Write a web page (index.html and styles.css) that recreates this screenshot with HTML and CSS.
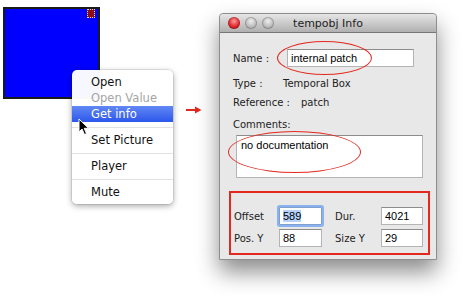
FILE: index.html
```html
<!DOCTYPE html>
<html lang="en">
<head>
    <meta charset="UTF-8">
    <title>tempobj Info</title>
    <link rel="stylesheet" href="styles.css">
</head>
<body>
    <div class="stage">
        <div class="boite">
            <span class="poignee"></span>
        </div>

        <ul class="menu">
            <li>Open</li>
            <li class="desactive">Open Value</li>
            <li class="actif">Get info</li>
            <li class="separateur"></li>
            <li>Set Picture</li>
            <li class="separateur"></li>
            <li>Player</li>
            <li class="separateur"></li>
            <li>Mute</li>
        </ul>

        <svg class="curseur" width="12" height="18" viewBox="0 0 12 18">
            <path d="M1 1 L1 14 L4 11 L6.5 16.5 L8.5 15.6 L6.2 10.3 L10.5 10.3 Z" fill="#000" stroke="#fff" stroke-width="1"/>
        </svg>

        <svg class="fleche" width="16" height="8" viewBox="0 0 16 8">
            <path d="M0 4 H10" stroke="#e3281e" stroke-width="2"/>
            <path d="M9 0.5 L15.5 4 L9 7.5 Z" fill="#e3281e"/>
        </svg>

        <div class="fenetre">
            <div class="barre-titre">
                <div class="boutons">
                    <span class="bouton rouge"></span>
                    <span class="bouton"></span>
                    <span class="bouton"></span>
                </div>
                <span class="titre">tempobj Info</span>
            </div>

            <div class="contenu">
                <div class="ligne ligne-nom">
                    <span class="etiquette">Name :</span>
                    <span class="champ champ-nom">internal patch</span>
                </div>
                <div class="ligne ligne-type">
                    <span class="etiquette etiquette-type">Type :</span>
                    <span class="valeur">Temporal Box</span>
                </div>
                <div class="ligne ligne-ref">
                    <span class="etiquette">Reference :</span>
                    <span class="valeur">patch</span>
                </div>
                <div class="ligne ligne-comm">
                    <span class="etiquette">Comments:</span>
                </div>
                <div class="commentaires">no documentation</div>

                <div class="cadre">
                    <span class="etiquette">Offset</span>
                    <span class="champ champ-focus"><span class="selection">589</span></span>
                    <span class="etiquette">Dur.</span>
                    <span class="champ">4021</span>
                    <span class="etiquette">Pos. Y</span>
                    <span class="champ">88</span>
                    <span class="etiquette">Size Y</span>
                    <span class="champ">29</span>
                </div>
            </div>

            <span class="ellipse ellipse-nom"></span>
            <span class="ellipse ellipse-comm"></span>
        </div>
    </div>
</body>
</html>
```

FILE: styles.css
```css
body {
    margin: 0;
    background-color: #fff;
    font-family: 'DejaVu Sans', sans-serif;
    color: #111;
}

.stage {
    position: relative;
    width: 463px;
    height: 296px;
    overflow: hidden;
}

/* boite bleue */
.boite {
    position: absolute;
    left: 3px;
    top: 7px;
    width: 93px;
    height: 88px;
    background-color: #0000ff;
    border: 2px solid #1a1a1a;
}

.poignee {
    position: absolute;
    right: 3px;
    top: 0;
    width: 6px;
    height: 7px;
    background-color: #8a0d12;
    border: 1px dotted #ddd;
}

/* menu contextuel */
.menu {
    position: absolute;
    left: 72px;
    top: 70px;
    width: 101px;
    margin: 0;
    padding: 4px 0;
    list-style: none;
    background-color: rgba(255, 255, 255, 0.97);
    border-radius: 5px;
    box-shadow: 0 2px 6px rgba(0, 0, 0, 0.35), 0 0 0 1px rgba(0, 0, 0, 0.08);
    font-size: 11.5px;
}

.menu li {
    height: 16px;
    line-height: 16px;
    padding-left: 19px;
}

.menu .desactive {
    color: #a5a5a5;
}

.menu .actif {
    color: #fff;
    background: linear-gradient(#6288f4, #2c57ec);
}

.menu .separateur {
    height: 10px;
    padding: 0;
    background: linear-gradient(transparent 5px, #e2e2e2 5px, #e2e2e2 6px, transparent 6px);
}

.curseur {
    position: absolute;
    left: 78px;
    top: 118px;
}

.fleche {
    position: absolute;
    left: 186px;
    top: 106px;
}

/* fenetre info */
.fenetre {
    position: absolute;
    left: 219px;
    top: 13px;
    width: 216px;
    height: 245px;
    background-color: #e8e8e8;
    border: 1px solid #8e8e8e;
    border-radius: 4px 4px 0 0;
    box-shadow: 0 12px 22px rgba(0, 0, 0, 0.45);
}

.barre-titre {
    position: relative;
    height: 18px;
    display: flex;
    align-items: center;
    justify-content: center;
    background: linear-gradient(#e6e6e6, #b0b0b0);
    border-bottom: 1px solid #777;
    border-radius: 4px 4px 0 0;
}

.boutons {
    position: absolute;
    left: 8px;
    top: 3px;
    display: flex;
    gap: 5px;
}

.bouton {
    width: 12px;
    height: 12px;
    border-radius: 50%;
    background: radial-gradient(circle at 50% 35%, #eee, #b8b8b8 60%, #9a9a9a);
    box-shadow: inset 0 0 0 1px rgba(0, 0, 0, 0.2);
}

.bouton.rouge {
    background: radial-gradient(circle at 50% 35%, #ff9a9a, #e0262a 55%, #9c1014);
}

.titre {
    font-size: 11px;
    color: #222;
}

.contenu {
    display: flex;
    flex-direction: column;
    padding: 16px 0 0 13px;
}

.ligne {
    display: flex;
    align-items: center;
    height: 16px;
}

.etiquette {
    font-size: 10px;
    color: #222;
}

.valeur {
    font-size: 10px;
    color: #222;
}

.ligne-nom {
    height: 18px;
}

.ligne-nom .etiquette {
    width: 54px;
}

.ligne-type {
    margin-top: 8px;
}

.etiquette-type {
    width: 50px;
}

.ligne-ref {
    margin-top: 3px;
}

.ligne-ref .etiquette {
    width: 68px;
}

.ligne-comm {
    margin-top: 6px;
}

.champ {
    box-sizing: border-box;
    height: 18px;
    padding: 0 3px;
    background-color: #fff;
    border: 1px solid #b4b4b4;
    border-top-color: #8c8c8c;
    font-family: 'Liberation Sans', sans-serif;
    font-size: 11px;
    line-height: 16px;
    color: #000;
}

.champ-nom {
    width: 127px;
}

.commentaires {
    box-sizing: border-box;
    width: 187px;
    height: 43px;
    margin: 3px 0 0 3px;
    padding: 3px 4px;
    background-color: #fff;
    border: 1px solid #b4b4b4;
    border-top-color: #8c8c8c;
    font-family: 'Liberation Sans', sans-serif;
    font-size: 11px;
    color: #000;
}

.cadre {
    box-sizing: border-box;
    width: 201px;
    height: 64px;
    margin: 13px 0 0 -4px;
    padding: 14px 0 0 3px;
    border: 2px solid #e3281e;
    display: grid;
    grid-template-columns: 45px 43px 13px 46px 42px;
    grid-template-rows: 18px 18px;
    row-gap: 4px;
    align-items: center;
}

.cadre .etiquette:nth-child(3),
.cadre .etiquette:nth-child(7) {
    grid-column: 4;
}

.champ-focus {
    border-color: #7e9fd0;
    box-shadow: 0 0 0 2px #8ab2ee;
    border-radius: 1px;
}

.selection {
    background-color: #b5d3fc;
}

.ellipse {
    position: absolute;
    border: 1.5px solid #e3281e;
    border-radius: 50%;
}

.ellipse-nom {
    left: 57px;
    top: 27px;
    width: 93px;
    height: 32px;
}

.ellipse-comm {
    left: 8px;
    top: 117px;
    width: 131px;
    height: 40px;
}
```
